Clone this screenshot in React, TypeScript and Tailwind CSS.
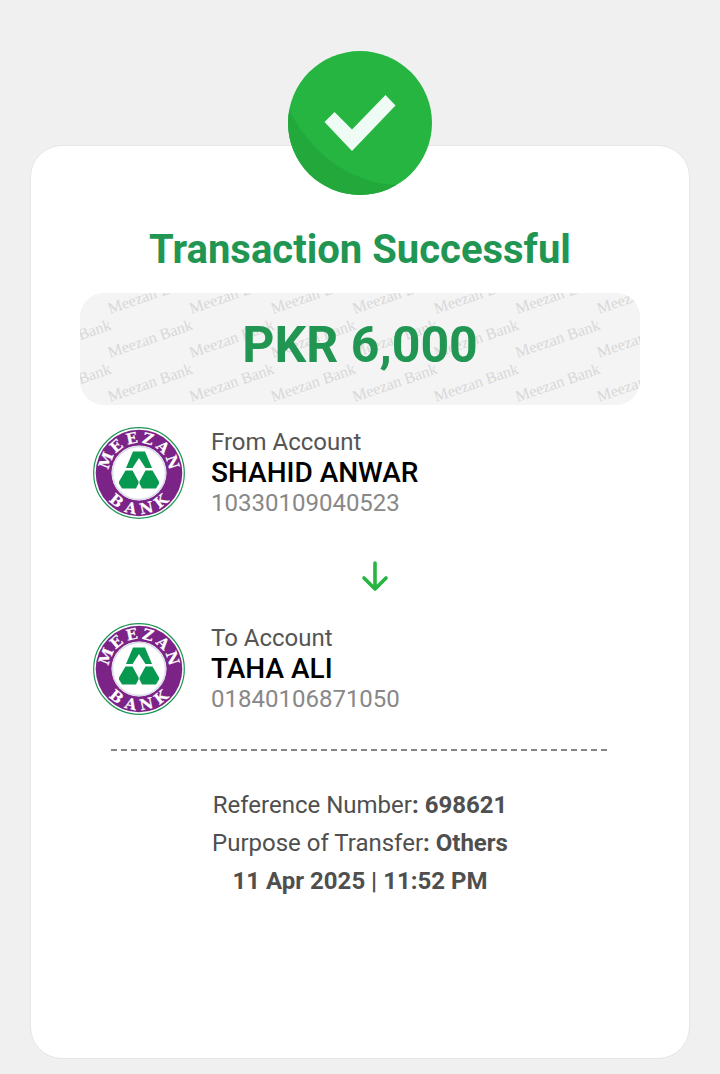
const ring = [
  { char: 'M', angle: -69 },
  { char: 'E', angle: -40 },
  { char: 'E', angle: -12 },
  { char: 'Z', angle: 15 },
  { char: 'A', angle: 43 },
  { char: 'N', angle: 72 },
];

const base = [
  { char: 'B', angle: 39 },
  { char: 'A', angle: 13 },
  { char: 'N', angle: -12 },
  { char: 'K', angle: -38 },
];

function SuccessBadge() {
  return (
    <svg viewBox="0 0 144 144" className="relative size-36" role="img" aria-label="Success">
      <defs>
        <clipPath id="badge-clip">
          <circle cx="72" cy="72" r="72" />
        </clipPath>
      </defs>
      <g clipPath="url(#badge-clip)">
        <rect width="144" height="144" fill="#25b540" />
        <path d="M0 56C20 100 62 133 110 134L104 144H0Z" fill="#23a83b" />
      </g>
      <path d="M36.5 71L46.5 61L64 78.500L97.500 44L107.500 54.500L64 100Z" fill="#effcf6" />
    </svg>
  );
}

function BankLogo() {
  return (
    <svg viewBox="-46 -46 92 92" className="size-[92px] shrink-0" role="img" aria-label="Meezan Bank">
      <circle r="45.300" fill="#fff" stroke="#1c9455" strokeWidth="1.200" />
      <circle r="43.300" fill="#7b2386" />
      <circle r="27.500" fill="#fff" />
      <circle r="26.500" fill="none" stroke="#d9dbe8" strokeWidth="1.500" />
      <g
        className="font-['DejaVu_Serif',serif] text-[15px] font-bold"
        fill="#fff"
        stroke="#fff"
        strokeWidth="0.2"
        textAnchor="middle"
      >
        {ring.map((item, i) => (
          <text key={i} y="-30" transform={`rotate(${item.angle})`}>{item.char}</text>
        ))}
        {base.map((item, i) => (
          <text key={i} y="41" transform={`rotate(${item.angle})`}>{item.char}</text>
        ))}
      </g>
      <g fill="#07994f">
        <path d="M-6 -21.500H6L13 -5H6.500L0 -15L-6.500 -5H-13Z" />
        <path d="M-13.500 -2.500H-6.500L-0.500 8.500V10.500L-3 15.500H-17L-20 10.500V8.500Z" />
        <path d="M6.500 -2.500H13.500L20 8.500V10.500L17 15.500H3L0.500 10.500V8.500Z" />
      </g>
    </svg>
  );
}

function Watermark() {
  const columns = [-1, 0, 1, 2, 3, 4, 5, 6];
  const rows = [0, 1, 2];
  return (
    <svg
      className="absolute inset-0 size-full"
      fill="#d8d8d8"
      fontFamily="'Liberation Serif', serif"
      fontSize="16"
      aria-hidden="true"
    >
      {rows.map((row) =>
        columns.map((column) => (
          <text
            key={`${row}:${column}`}
            transform={`translate(${30 + column * 81.5} ${21 + row * 44}) rotate(-19)`}
          >
            Meezan Bank
          </text>
        )),
      )}
    </svg>
  );
}

function Account({ label, name, number }: { label: string; name: string; number: string }) {
  return (
    <section className="flex items-center gap-[26px]">
      <BankLogo />
      <div className="pb-0.5">
        <p className="text-2xl leading-[30px] text-[#555]">{label}</p>
        <h2 className="text-[28px] leading-8 font-medium text-black">{name}</h2>
        <p className="text-2xl leading-7 text-[#888]">{number}</p>
      </div>
    </section>
  );
}

export default function App() {
  return (
    <main className="flex min-h-screen flex-col bg-[#f0f0f0] px-[30px] pt-[145px] pb-[15px] font-[Roboto,sans-serif]">
      <article className="flex grow flex-col rounded-[32px] border border-[#e6e6e6] bg-white px-[49px]">
        <div className="-mt-[95px] flex justify-center">
          <SuccessBadge />
        </div>
        <h1 className="mt-[31px] text-center text-[40px] leading-12 font-bold text-[#219653]">
          Transaction Successful
        </h1>
        <div className="relative mt-[19px] flex h-28 items-center justify-center overflow-hidden rounded-3xl bg-[#f4f4f4]">
          <Watermark />
          <p className="relative pb-2 text-[50px] leading-12 font-bold text-[#219653]">PKR 6,000</p>
        </div>
        <div className="mt-[22px] px-[13px]">
          <Account label="From Account" name="SHAHID ANWAR" number="10330109040523" />
          <div className="flex h-[104px] justify-center pt-[41px] pl-[30px]">
            <svg
              viewBox="0 0 28 32"
              className="h-8 w-7"
              fill="none"
              stroke="#25b540"
              strokeWidth="3.600"
              strokeLinecap="round"
              strokeLinejoin="round"
              aria-hidden="true"
            >
              <path d="M14 3V29M3 18L14 29L25 18" />
            </svg>
          </div>
          <Account label="To Account" name="TAHA ALI" number="01840106871050" />
        </div>
        <div className="mx-[31px] mt-[34px] h-0.5 bg-[repeating-linear-gradient(90deg,#858585_0_6px,transparent_6px_10px)]" />
        <div className="mt-[35px] pb-10 text-center text-2xl leading-[38px] text-[#4f4f4f]">
          <p>Reference Number<strong>: 698621</strong></p>
          <p>Purpose of Transfer<strong>: Others</strong></p>
          <p className="font-bold">11 Apr 2025 | 11:52 PM</p>
        </div>
      </article>
    </main>
  );
}
